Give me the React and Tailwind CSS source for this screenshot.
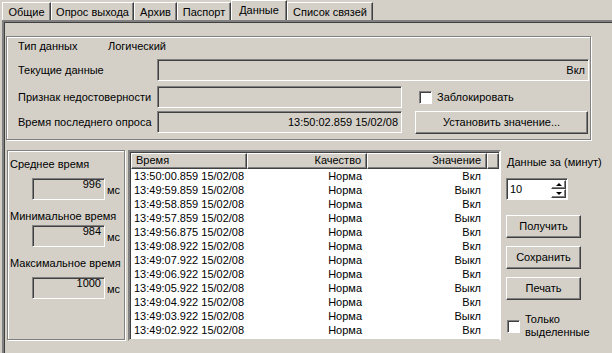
import React from 'react';

const tabs = [
  { label: 'Общие', w: 'w-[49px]' },
  { label: 'Опрос выхода', w: 'w-[83px]' },
  { label: 'Архив', w: 'w-[43px]' },
  { label: 'Паспорт', w: 'w-[54px]' },
  { label: 'Данные', w: 'w-[56px]', active: true },
  { label: 'Список связей', w: 'w-[86px]' },
];

const rows = [
  ['13:50:00.859 15/02/08', 'Вкл'],
  ['13:49:59.859 15/02/08', 'Выкл'],
  ['13:49:58.859 15/02/08', 'Вкл'],
  ['13:49:57.859 15/02/08', 'Выкл'],
  ['13:49:56.875 15/02/08', 'Вкл'],
  ['13:49:08.922 15/02/08', 'Вкл'],
  ['13:49:07.922 15/02/08', 'Выкл'],
  ['13:49:06.922 15/02/08', 'Вкл'],
  ['13:49:05.922 15/02/08', 'Выкл'],
  ['13:49:04.922 15/02/08', 'Вкл'],
  ['13:49:03.922 15/02/08', 'Выкл'],
  ['13:49:02.922 15/02/08', 'Вкл'],
];

// classic 3d borders
const sunken = 'border border-[#808080] border-r-white border-b-white shadow-[inset_1px_1px_0_#404040]';
const raised = 'border border-white border-r-[#404040] border-b-[#404040] shadow-[inset_-1px_-1px_0_#808080]';

const Button = ({ children, className = '' }) => (
  <div className={`${raised} bg-[#d4d0c8] flex items-center justify-center ${className}`}>
    {children}
  </div>
);

const Checkbox = () => <div className={`${sunken} bg-white w-[13px] h-[13px] shrink-0`} />;

const StatField = ({ label, value, labelTop, fieldTop }) => (
  <>
    <div className={`pl-[2px] h-[13px] whitespace-nowrap ${labelTop}`}>{label}</div>
    <div className={`flex items-center ${fieldTop}`}>
      <div className={`${sunken} ml-[24px] w-[73px] h-[22px] text-right pr-[3px]`}>
        <div className="-mt-[1px]">{value}</div>
      </div>
      <span className="ml-[2px] mt-[2px]">мс</span>
    </div>
  </>
);

const App = () => {
  return (
    <div className="w-[612px] h-[353px] bg-[#d4d0c8] overflow-hidden flex flex-col text-black text-[11px] leading-[13px] font-['Liberation_Sans',Arial,sans-serif]">
      {/* tab strip */}
      <div className="h-[20px] flex items-end pl-[2px] shrink-0">
        {tabs.map((t) =>
          t.active ? (
            <div
              key={t.label}
              className={`${t.w} h-[20px] border-t border-l border-white border-r border-r-[#404040] shadow-[inset_-1px_0_0_#808080] flex justify-center pt-[3px]`}
            >
              {t.label}
            </div>
          ) : (
            <div
              key={t.label}
              className={`${t.w} h-[18px] border-t border-l border-white border-r border-r-[#404040] shadow-[inset_-1px_0_0_#808080] flex justify-center pt-[3px]`}
            >
              {t.label}
            </div>
          )
        )}
      </div>

      {/* tab panel */}
      <div className="flex-1 ml-[2px] border-t-2 border-l-2 border-[#808080] border-r-0 border-b-0 shadow-[inset_1px_1px_0_#404040] flex flex-col">
        {/* group box */}
        <div className="ml-[2px] mt-[14px] w-[585px] h-[104px] border border-[#808080] shadow-[inset_1px_1px_0_white,1px_1px_0_white] shrink-0">
          <div className="h-[19px] flex items-center pl-[11px]">
            <span className="w-[90px]">Тип данных</span>
            <span>Логический</span>
          </div>
          <div className="mt-[3px] h-[22px] flex items-center pl-[11px]">
            <span className="w-[139px] shrink-0">Текущие данные</span>
            <div className={`${sunken} flex-1 mr-[1px] h-[22px] flex items-center justify-end pr-[3px]`}>Вкл</div>
          </div>
          <div className="mt-[5px] h-[22px] flex items-center pl-[11px]">
            <span className="w-[139px] shrink-0 whitespace-nowrap">Признак недостоверности</span>
            <div className={`${sunken} w-[245px] h-[22px]`} />
            <div className="ml-[17px] flex items-center">
              <Checkbox />
              <span className="ml-[5px]">Заблокировать</span>
            </div>
          </div>
          <div className="mt-[3px] h-[22px] flex items-center pl-[11px]">
            <span className="w-[139px] shrink-0 whitespace-nowrap">Время последнего опроса</span>
            <div className={`${sunken} w-[245px] h-[22px] flex items-center justify-end pr-[3px]`}>13:50:02.859 15/02/08</div>
            <Button className="ml-[13px] w-[173px] h-[23px]">Установить значение...</Button>
          </div>
        </div>

        {/* lower section */}
        <div className="mt-[10px] flex">
          {/* statistics */}
          <div className="ml-[3px] w-[118px] h-[190px] border border-[#808080] shadow-[inset_1px_1px_0_white,1px_1px_0_white] flex flex-col">
            <StatField label="Среднее время" value="996" labelTop="mt-[7px]" fieldTop="mt-[7px]" />
            <StatField label="Минимальное время" value="984" labelTop="mt-[10px]" fieldTop="mt-[2px]" />
            <StatField label="Максимальное время" value="1000" labelTop="mt-[10px]" fieldTop="mt-[7px]" />
          </div>

          {/* list */}
          <div className={`ml-[3px] w-[373px] h-[191px] bg-white border-2 border-[#808080] border-r-white border-b-[#d4d0c8] border-r-[#d4d0c8] shadow-[inset_1px_1px_0_#404040] pl-[1px] pt-[1px] flex flex-col`}>
            <div className="h-[16px] flex shrink-0">
              <div className={`${raised} w-[116px] pl-[4px] bg-[#d4d0c8]`}>Время</div>
              <div className={`${raised} w-[120px] text-right pr-[5px] bg-[#d4d0c8]`}>Качество</div>
              <div className={`${raised} w-[120px] text-right pr-[5px] bg-[#d4d0c8]`}>Значение</div>
              <div className={`${raised} flex-1 bg-[#d4d0c8]`} />
            </div>
            {rows.map(([time, val]) => (
              <div key={time} className="h-[14px] flex items-center">
                <div className="w-[116px] pl-[3px] whitespace-nowrap">{time}</div>
                <div className="w-[120px] text-right pr-[5px]">Норма</div>
                <div className="w-[120px] text-right pr-[6px]">{val}</div>
              </div>
            ))}
          </div>

          {/* controls */}
          <div className="ml-[5px] flex flex-col">
            <div className="mt-[6px] pl-[1px] whitespace-nowrap">Данные за (минут)</div>
            <div className={`${sunken} bg-white mt-[9px] w-[62px] h-[22px] flex items-center justify-between`}>
              <span className="pl-[3px]">10</span>
              <div className="flex flex-col mr-[1px]">
                <div className={`${raised} w-[15px] h-[9px] flex items-center justify-center`}>
                  <div className="w-0 h-0 border-l-[3px] border-r-[3px] border-b-[3px] border-l-transparent border-r-transparent border-b-black" />
                </div>
                <div className={`${raised} w-[15px] h-[9px] flex items-center justify-center`}>
                  <div className="w-0 h-0 border-l-[3px] border-r-[3px] border-t-[3px] border-l-transparent border-r-transparent border-t-black" />
                </div>
              </div>
            </div>
            <Button className="mt-[15px] w-[75px] h-[23px]">Получить</Button>
            <Button className="mt-[8px] w-[75px] h-[23px]">Сохранить</Button>
            <Button className="mt-[8px] w-[75px] h-[23px]">Печать</Button>
            <div className="mt-[13px] ml-[1px] flex items-center">
              <Checkbox />
              <div className="ml-[5px]">
                <div>Только</div>
                <div>выделенные</div>
              </div>
            </div>
          </div>
        </div>
      </div>
    </div>
  );
};

export default App;
